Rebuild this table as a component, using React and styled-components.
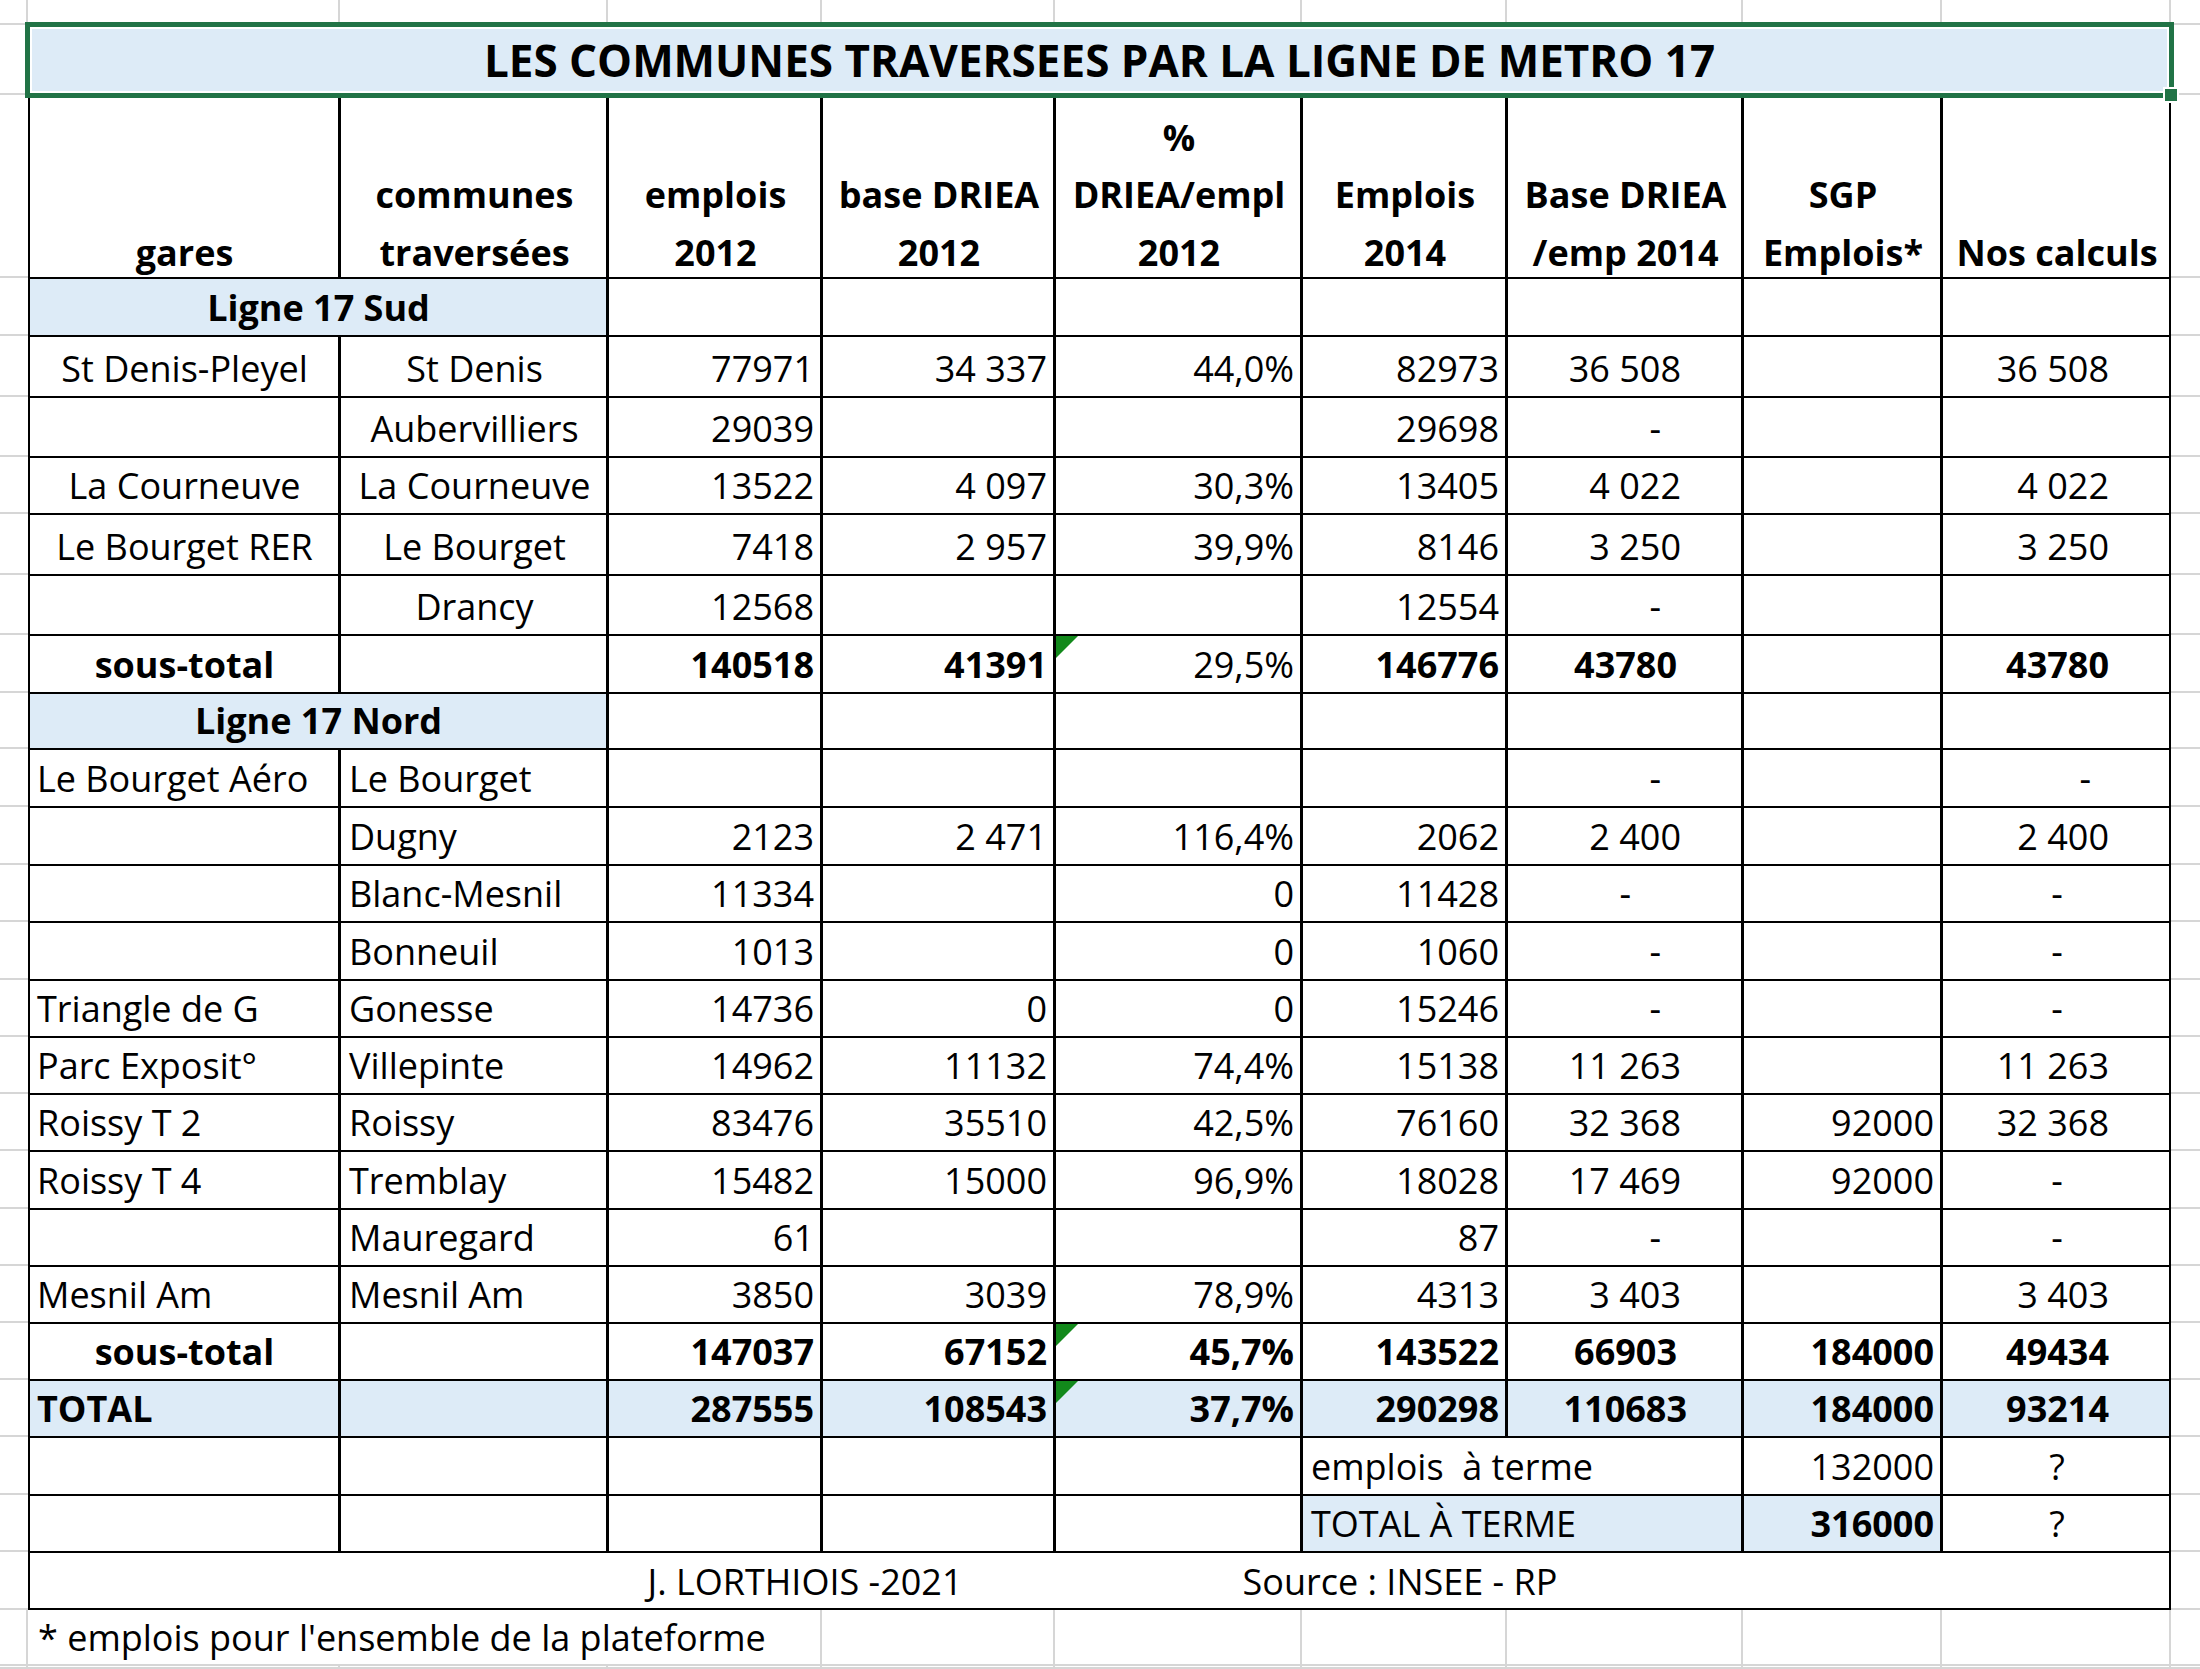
import React from "react";
import styled, { createGlobalStyle, css } from "styled-components";

const GRID = "#d6d6d6";
const BLUE = "#ddebf7";
const EXCEL = "#217346";

const COLS = [28, 312, 268, 214, 233, 247, 205, 236, 199, 229, 29];
const ROWS = [
  25, 70, 183,
  58, 61, 60, 57, 61, 60, 58,
  56, 58, 58, 57, 58, 57, 57, 57, 58, 57, 57, 57,
  57, 58, 57, 58,
  56, 3,
];

const GlobalStyle = createGlobalStyle`
  html, body {
    margin: 0;
    padding: 0;
    background: #fff;
    overflow: hidden;
  }
  body {
    font-family: "Open Sans", Lato, sans-serif;
    color: #000;
  }
`;

const Sheet = styled.div`
  display: grid;
  width: 2200px;
  grid-template-columns: ${COLS.map((w) => `${w}px`).join(" ")};
  grid-template-rows: ${ROWS.map((h) => `${h}px`).join(" ")};
  font-family: "Open Sans", Lato, sans-serif;
  font-size: 36px;
`;

const Gap = styled.div`
  grid-column: span ${(p) => p.$span || 1};
  box-shadow: ${(p) => (p.$right ? `inset -2px 0 0 ${GRID},` : "")} inset 0 -2px 0 ${GRID};
`;

const justify = { left: "flex-start", center: "center", right: "flex-end" };

const Cell = styled.div`
  grid-column: span ${(p) => p.$span || 1};
  position: relative;
  display: flex;
  align-items: flex-end;
  justify-content: ${(p) => justify[p.$align || "right"]};
  padding: 0 ${(p) => p.$pr ?? 8}px 7px ${(p) => p.$pl ?? 9}px;
  line-height: 42px;
  font-weight: ${(p) => (p.$bold ? 700 : 400)};
  white-space: pre;
  background: ${(p) => (p.$fill ? BLUE : "#fff")};
  box-shadow: inset ${(p) => (p.$first ? 2 : 1)}px 0 0 #000, inset -2px 0 0 #000,
    inset 0 1px 0 #000, inset 0 -1px 0 #000;
  ${(p) =>
    p.$flag &&
    css`
      &::before {
        content: "";
        position: absolute;
        top: 1px;
        left: 1px;
        border-top: 22px solid #12891b;
        border-right: 22px solid transparent;
      }
    `}
`;

const Head = styled(Cell)`
  justify-content: center;
  padding-bottom: 0;
  line-height: 57.5px;
  font-weight: 700;
  text-align: center;
  & > span {
    margin-bottom: -3px;
  }
`;

const Title = styled.div`
  grid-column: span 9;
  position: relative;
  z-index: 2;
  display: flex;
  align-items: center;
  justify-content: center;
  background: ${BLUE};
  font-size: 44px;
  font-weight: 700;
  line-height: 1;
  outline: 5px solid ${EXCEL};
  outline-offset: -2px;
  box-shadow: inset 0 0 0 4px #fff;
`;

const Handle = styled.span`
  position: absolute;
  right: -8px;
  bottom: -8px;
  width: 12px;
  height: 12px;
  background: ${EXCEL};
  border: 2px solid #fff;
`;

const Credit = styled.div`
  grid-column: span 9;
  display: flex;
  align-items: flex-end;
  gap: 195px;
  padding: 0 0 7px 577px;
  line-height: 42px;
  box-shadow: inset 2px 0 0 #000, inset -2px 0 0 #000, inset 0 1px 0 #000,
    inset 0 -2px 0 #000;
`;

const CreditText = styled.span`
  width: 400px;
  text-align: center;
  white-space: nowrap;
`;

const Note = styled.div`
  grid-column: span 3;
  display: flex;
  align-items: flex-end;
  padding: 0 0 7px 10px;
  line-height: 42px;
  white-space: nowrap;
  box-shadow: inset -2px 0 0 ${GRID}, inset 0 -2px 0 ${GRID};
`;

const c = (t, o = {}) => ({ t, align: "center", ...o });
const l = (t, o = {}) => ({ t, align: "left", ...o });
const r = (t, o = {}) => ({ t, align: "right", ...o });
const acc = (t, o = {}) => r(t, { pr: 62, ...o });
const dash = (pr = 82) => r("-", { pr });
const e = (o = {}) => r("", o);
const B = { bold: true };
const BF = { bold: true, fill: true };

const section = (name) => [
  c(name, { span: 2, fill: true, bold: true }),
  e(), e(), e(), e(), e(), e(), e(),
];

const HEAD = [
  ["gares"],
  ["communes", "traversées"],
  ["emplois", "2012"],
  ["base DRIEA", "2012"],
  ["%", "DRIEA/empl", "2012"],
  ["Emplois", "2014"],
  ["Base DRIEA", "/emp 2014"],
  ["SGP", "Emplois*"],
  ["Nos calculs"],
];

const BODY = [
  section("Ligne 17 Sud"),
  [c("St Denis-Pleyel"), c("St Denis"), r("77971"), r("34 337"), r("44,0%"), r("82973"), acc("36 508"), e(), acc("36 508")],
  [e(), c("Aubervilliers"), r("29039"), e(), e(), r("29698"), dash(), e(), e()],
  [c("La Courneuve"), c("La Courneuve"), r("13522"), r("4 097"), r("30,3%"), r("13405"), acc("4 022"), e(), acc("4 022")],
  [c("Le Bourget RER"), c("Le Bourget"), r("7418"), r("2 957"), r("39,9%"), r("8146"), acc("3 250"), e(), acc("3 250")],
  [e(), c("Drancy"), r("12568"), e(), e(), r("12554"), dash(), e(), e()],
  [c("sous-total", B), e(), r("140518", B), r("41391", B), r("29,5%", { flag: true }), r("146776", B), acc("43780", { ...B, pr: 66 }), e(), acc("43780", B)],
  section("Ligne 17 Nord"),
  [l("Le Bourget Aéro"), l("Le Bourget"), e(), e(), e(), e(), dash(), e(), dash(80)],
  [e(), l("Dugny"), r("2123"), r("2 471"), r("116,4%"), r("2062"), acc("2 400"), e(), acc("2 400")],
  [e(), l("Blanc-Mesnil"), r("11334"), e(), r("0"), r("11428"), dash(112), e(), c("-")],
  [e(), l("Bonneuil"), r("1013"), e(), r("0"), r("1060"), dash(), e(), c("-")],
  [l("Triangle de G"), l("Gonesse"), r("14736"), r("0"), r("0"), r("15246"), dash(), e(), c("-")],
  [l("Parc Exposit°"), l("Villepinte"), r("14962"), r("11132"), r("74,4%"), r("15138"), acc("11 263"), e(), acc("11 263")],
  [l("Roissy T 2"), l("Roissy"), r("83476"), r("35510"), r("42,5%"), r("76160"), acc("32 368"), r("92000"), acc("32 368")],
  [l("Roissy T 4"), l("Tremblay"), r("15482"), r("15000"), r("96,9%"), r("18028"), acc("17 469"), r("92000"), c("-")],
  [e(), l("Mauregard"), r("61"), e(), e(), r("87"), dash(), e(), c("-")],
  [l("Mesnil Am"), l("Mesnil Am"), r("3850"), r("3039"), r("78,9%"), r("4313"), acc("3 403"), e(), acc("3 403")],
  [c("sous-total", B), e(), r("147037", B), r("67152", B), r("45,7%", { ...B, flag: true }), r("143522", B), acc("66903", { ...B, pr: 66 }), r("184000", B), acc("49434", B)],
  [l("TOTAL", BF), e({ fill: true }), r("287555", BF), r("108543", BF), r("37,7%", { ...BF, flag: true }), r("290298", BF), acc("110683", { ...BF, pr: 56 }), r("184000", BF), acc("93214", BF)],
  [e(), e(), e(), e(), e(), l("emplois  à terme", { span: 2 }), r("132000"), c("?")],
  [e(), e(), e(), e(), e(), l("TOTAL À TERME", { span: 2, fill: true }), r("316000", BF), c("?")],
];

const gapRow = (key) => (
  <React.Fragment key={key}>
    {COLS.map((_, i) => (
      <Gap key={i} $right={i < COLS.length - 1} />
    ))}
  </React.Fragment>
);

export default function App() {
  return (
    <>
      <GlobalStyle />
      <Sheet>
        {gapRow("top")}

        <Gap />
        <Title>
          LES COMMUNES TRAVERSEES PAR LA LIGNE DE METRO 17
          <Handle />
        </Title>
        <Gap />

        <Gap />
        {HEAD.map((lines, i) => (
          <Head key={i} $first={i === 0}>
            <span>
              {lines.map((line, j) => (
                <React.Fragment key={j}>
                  {j > 0 && <br />}
                  {line}
                </React.Fragment>
              ))}
            </span>
          </Head>
        ))}
        <Gap />

        {BODY.map((row, ri) => (
          <React.Fragment key={ri}>
            <Gap />
            {row.map((cell, ci) => (
              <Cell
                key={ci}
                $first={ci === 0}
                $align={cell.align}
                $bold={cell.bold}
                $fill={cell.fill}
                $flag={cell.flag}
                $span={cell.span}
                $pr={cell.pr}
              >
                {cell.t}
              </Cell>
            ))}
            <Gap />
          </React.Fragment>
        ))}

        <Gap />
        <Credit>
          <CreditText>J. LORTHIOIS -2021</CreditText>
          <CreditText>Source : INSEE - RP</CreditText>
        </Credit>
        <Gap />

        <Gap $right />
        <Note>* emplois pour l'ensemble de la plateforme</Note>
        {[0, 1, 2, 3, 4, 5].map((i) => (
          <Gap key={i} $right />
        ))}
        <Gap />

        {gapRow("bottom")}
      </Sheet>
    </>
  );
}
